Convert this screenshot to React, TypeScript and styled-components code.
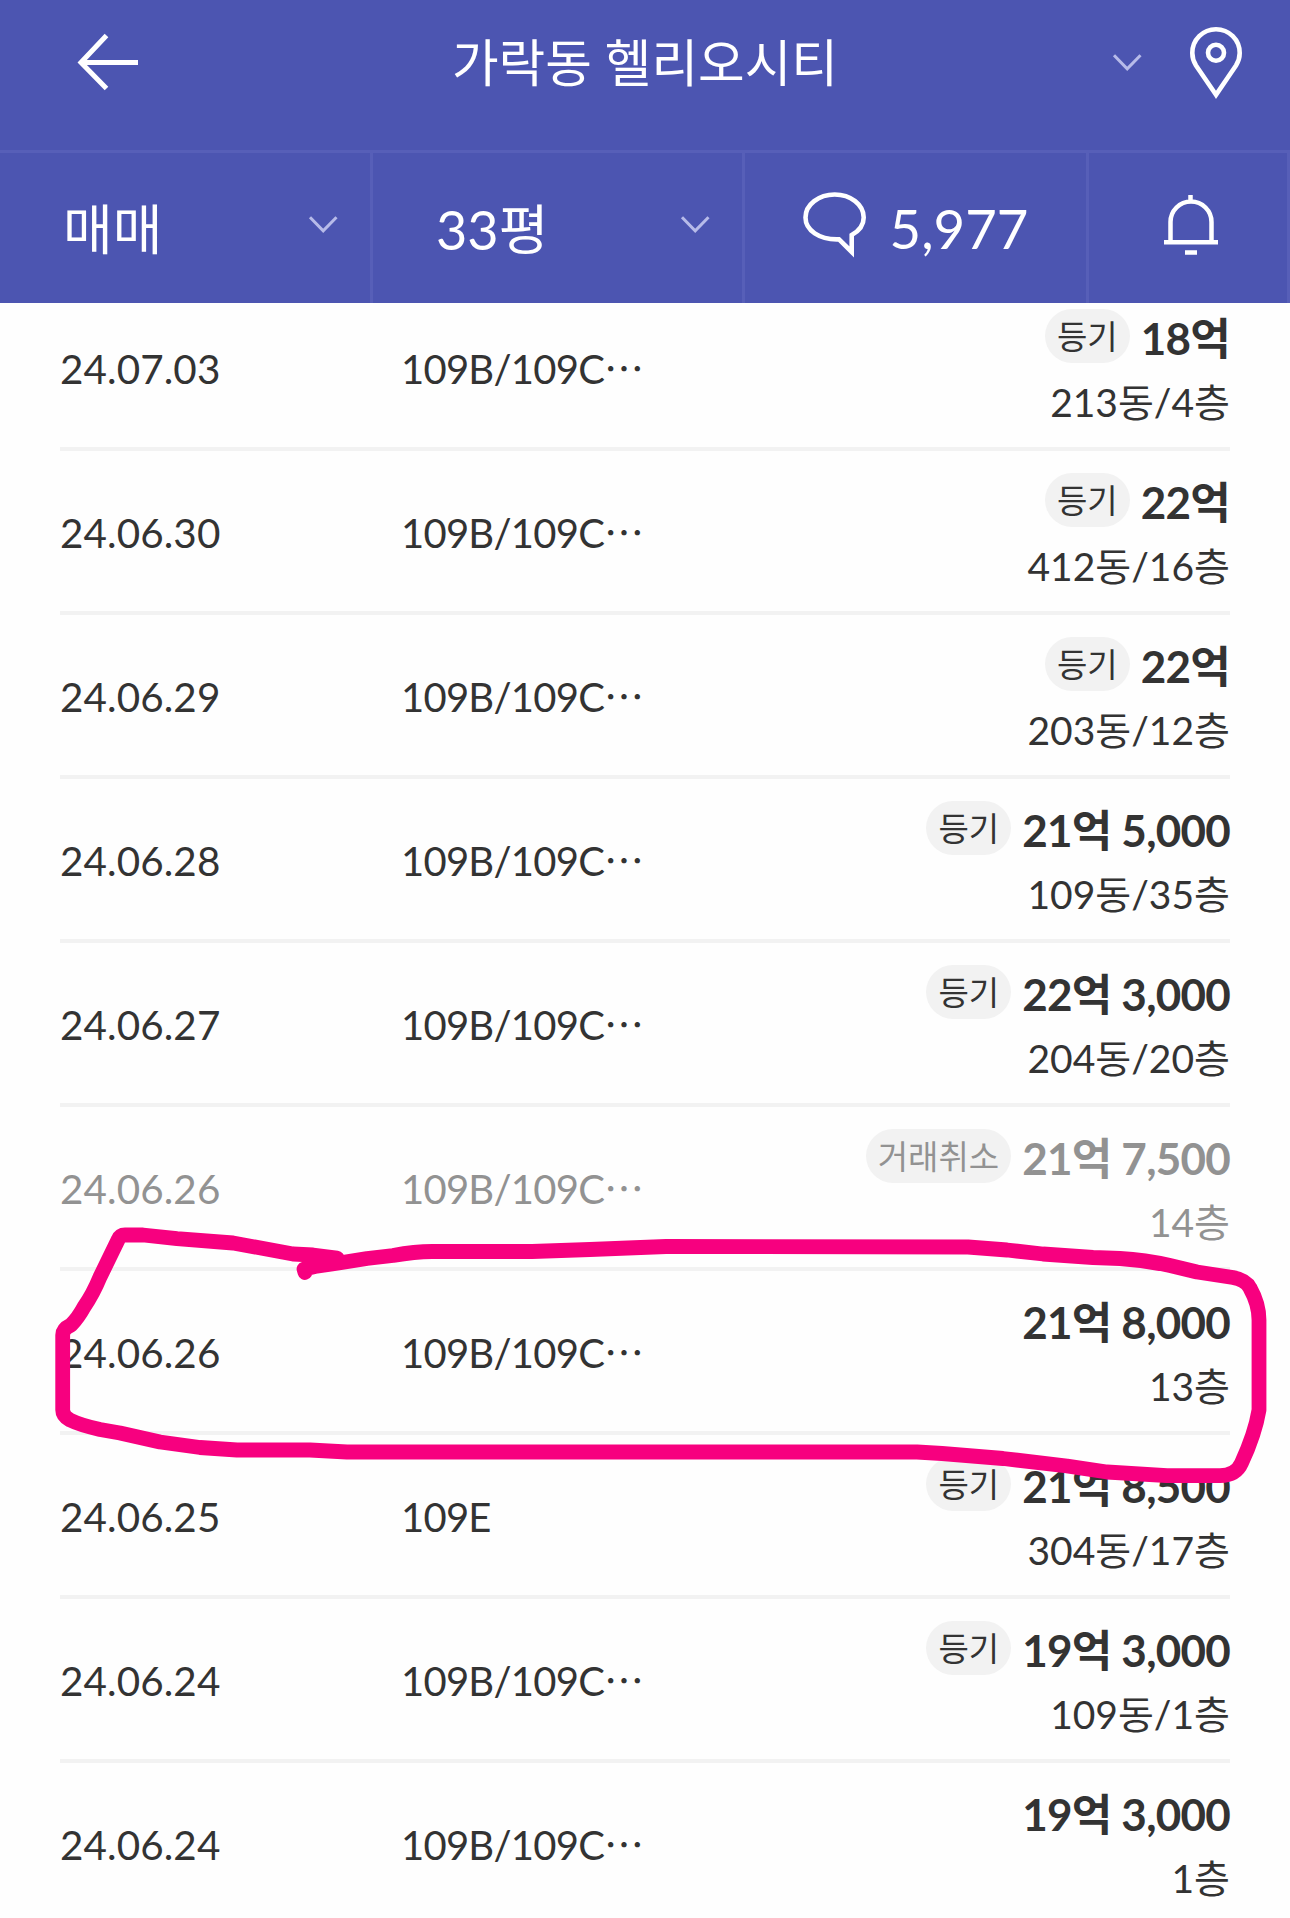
import React from "react";
import styled, { createGlobalStyle, css } from "styled-components";

const GlobalStyle = createGlobalStyle`
  *, *::before, *::after { box-sizing: border-box; }
  body {
    margin: 0;
    background: #fefefe;
    color: #333;
    font-family: Lato, "Noto Sans CJK KR", sans-serif;
  }
`;

const Screen = styled.main`
  position: relative;
  display: flex;
  flex-direction: column;
  width: 1290px;
  height: 1918px;
  overflow: hidden;
`;

const Header = styled.header`
  flex: none;
  height: 303px;
  background: #4c55b1;
  color: #fff;
`;

const TitleBar = styled.div`
  display: grid;
  grid-template-columns: 170px 1fr 199px;
  height: 153px;
  padding: 0 48px 25px 77px;
  align-items: center;
  border-bottom: 3px solid #575fb8;
`;

const Title = styled.h1`
  margin: 0;
  font-size: 50.7px;
  font-weight: 400;
  line-height: 76px;
  text-align: center;
`;

const TitleActions = styled.div`
  display: flex;
  align-items: center;
  justify-content: flex-end;
  gap: 49px;
`;

const FilterBar = styled.div`
  display: grid;
  grid-template-columns: 373px 372px 344px 201px;
  height: 150px;
`;

const FilterCell = styled.div<{ $center?: boolean }>`
  display: flex;
  align-items: center;
  justify-content: ${(p) => (p.$center ? "center" : "space-between")};
  padding: ${(p) => (p.$center ? "0" : "0 33px 0 63px")};
  border-right: 3px solid #575fb8;
  font-size: 54.5px;
  line-height: 80px;
`;

const FilterLabel = styled.span`
  padding-top: 3px;
  font-size: 54px;
`;

const CommentCount = styled.span`
  margin-left: 23px;
`;

const Icon = styled.svg<{ $lift?: number }>`
  display: block;
  flex: none;
  margin-bottom: ${(p) => p.$lift ?? 0}px;
  overflow: visible;
  fill: none;
  stroke: currentColor;
`;

const ChevronIcon = styled(Icon)`
  color: #b7bbe9;
`;

const BellIcon = styled(Icon)`
  margin-left: 5px;
`;

const DealList = styled.ul`
  flex: 1;
  min-height: 0;
  margin: 0;
  padding: 0 60px;
  list-style: none;
  overflow: hidden;
`;

const DealRow = styled.li<{ $cancelled?: boolean }>`
  display: grid;
  grid-template-columns: 341px 1fr auto;
  align-items: center;
  height: 164px;
  border-bottom: 4px solid #f2f2f2;
  line-height: 60px;
  ${(p) => p.$cancelled && css`color: #929292;`}

  &:first-child { margin-top: -16px; }
`;

const DealDate = styled.span`
  padding-top: 4px;
  font-size: 40.4px;
  letter-spacing: 0.1px;
`;

const DealType = styled.span`
  padding-top: 4px;
  font-size: 40px;
  letter-spacing: -0.75px;
`;

const DealInfo = styled.div`
  display: flex;
  flex-direction: column;
  align-self: start;
  align-items: flex-end;
  padding-top: 17px;
`;

const PriceLine = styled.div`
  display: flex;
  align-items: center;
  gap: 11px;
  height: 64px;
`;

const Badge = styled.span`
  height: 54px;
  padding: 0 12px;
  border-radius: 27px;
  background: #f2f2f2;
  font-size: 33px;
  line-height: 54px;
`;

const Price = styled.strong`
  padding-top: 4px;
  font-size: 44px;
  font-weight: 700;
  line-height: 64px;
  letter-spacing: -0.75px;
`;

const Unit = styled.span`
  font-size: 39px;
  line-height: 68px;
`;

const MarkerStroke = styled.svg`
  position: absolute;
  inset: 0;
  pointer-events: none;
  fill: none;
  stroke: #f7007f;
  stroke-width: 14.8;
  stroke-linecap: round;
  stroke-linejoin: round;
`;

const Chevron = ({ lift }: { lift?: number }) => (
  <ChevronIcon $lift={lift} width="28" height="17" viewBox="0 0 28 17" strokeWidth="3">
    <path d="M1 1.2 14.2 14.8 27.500 1.2" />
  </ChevronIcon>
);

interface Deal {
  date: string;
  type: string;
  badge?: string;
  price: string;
  unit: string;
  cancelled?: boolean;
}

const deals: Deal[] = [
  { date: "24.07.03", type: "109B/109C⋯", badge: "등기", price: "18억", unit: "213동/4층" },
  { date: "24.06.30", type: "109B/109C⋯", badge: "등기", price: "22억", unit: "412동/16층" },
  { date: "24.06.29", type: "109B/109C⋯", badge: "등기", price: "22억", unit: "203동/12층" },
  { date: "24.06.28", type: "109B/109C⋯", badge: "등기", price: "21억 5,000", unit: "109동/35층" },
  { date: "24.06.27", type: "109B/109C⋯", badge: "등기", price: "22억 3,000", unit: "204동/20층" },
  { date: "24.06.26", type: "109B/109C⋯", badge: "거래취소", price: "21억 7,500", unit: "14층", cancelled: true },
  { date: "24.06.26", type: "109B/109C⋯", price: "21억 8,000", unit: "13층" },
  { date: "24.06.25", type: "109E", badge: "등기", price: "21억 8,500", unit: "304동/17층" },
  { date: "24.06.24", type: "109B/109C⋯", badge: "등기", price: "19억 3,000", unit: "109동/1층" },
  { date: "24.06.24", type: "109B/109C⋯", price: "19억 3,000", unit: "1층" },
];

export default function App() {
  return (
    <Screen lang="ko">
      <GlobalStyle />
      <Header>
        <TitleBar>
          <Icon width="62" height="54" viewBox="0 0 62 54" strokeWidth="5">
            <path d="M29.500 -0.500 4 26.500 29.500 52.500M4 26.500H61" />
          </Icon>
          <Title>가락동 헬리오시티</Title>
          <TitleActions>
            <Chevron />
            <Icon width="52" height="72" viewBox="0 0 52 72" strokeWidth="4.600">
              <path d="M26 67.800 6 38.500C3.500 34.500 2.300 30 2.300 26A23.700 23.700 0 0 1 49.700 26C49.700 30 48.500 34.500 46 38.500Z" />
              <circle cx="26" cy="25.700" r="8" />
            </Icon>
          </TitleActions>
        </TitleBar>
        <FilterBar>
          <FilterCell>
            <FilterLabel>매매</FilterLabel>
            <Chevron lift={7} />
          </FilterCell>
          <FilterCell>
            <FilterLabel>33평</FilterLabel>
            <Chevron lift={7} />
          </FilterCell>
          <FilterCell $center>
            <Icon $lift={10} width="64" height="62" viewBox="0 0 64 62" strokeWidth="4.600">
              <path d="M48.700 43C56 39 60.700 32.500 60.700 25.500 60.700 12.500 47.500 2.500 31.700 2.500S2.500 12.500 2.500 25.500C2.500 38 16 48 36 47.300L48.700 60Z" />
            </Icon>
            <CommentCount>5,977</CommentCount>
          </FilterCell>
          <FilterCell $center>
            <BellIcon $lift={7} width="54" height="60" viewBox="0 0 54 60" strokeWidth="4.500">
              <path d="M26.500 0V6M6.500 47V27A20.500 20.500 0 0 1 47.500 27V47M0 47.200H54M21 57.500H33" />
            </BellIcon>
          </FilterCell>
        </FilterBar>
      </Header>
      <DealList>
        {deals.map((deal, i) => (
          <DealRow key={i} $cancelled={deal.cancelled}>
            <DealDate>{deal.date}</DealDate>
            <DealType>{deal.type}</DealType>
            <DealInfo>
              <PriceLine>
                {deal.badge && <Badge>{deal.badge}</Badge>}
                <Price>{deal.price}</Price>
              </PriceLine>
              <Unit>{deal.unit}</Unit>
            </DealInfo>
          </DealRow>
        ))}
      </DealList>
      <MarkerStroke width="1290" height="1918" viewBox="0 0 1290 1918">
        <path d="M305 1272.500 304 1269 315 1266.500 342 1262.500 367 1258.500 393 1255.500Q415 1251.500 432 1251.500L532 1251.500 590 1249.500 666 1246.500 968 1247 1007 1250 1043 1254 1093 1257.500 1120 1258.500Q1145 1260 1170 1265.500L1197 1272 1233 1277.500Q1246 1280 1250 1288 1259 1304 1259 1320L1259 1410Q1255 1434 1241.500 1463 1236 1475.500 1220 1475.700L1167 1475.700 1107 1472 1067 1466 1003 1458.500 942 1453.500 917 1452 347 1452 310 1450 237 1450 200 1447.500 160 1442 120 1433 100 1429.500Q80 1425 70 1420 62.700 1416 62.700 1410L62.700 1335Q62.700 1329 71 1325 78 1318 84 1307 93 1294 100 1277L118 1240Q120 1235 125 1235L143 1235 177 1238.700 233 1243 293 1254 313 1255 337 1258" />
      </MarkerStroke>
    </Screen>
  );
}
